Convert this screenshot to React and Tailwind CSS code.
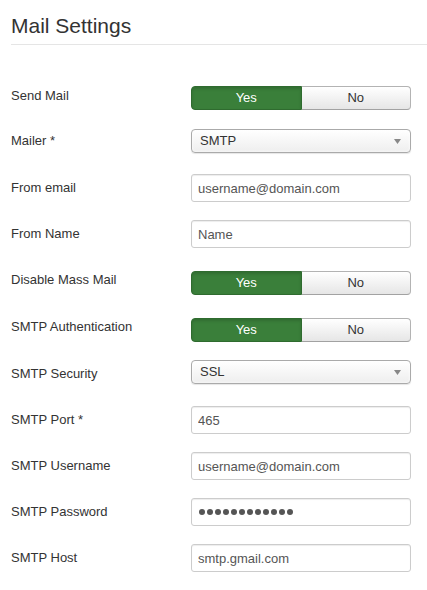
import React from 'react'

const font = { fontFamily: '"Liberation Sans", Arial, sans-serif' }

const rows = [
  { label: 'Send Mail', type: 'toggle', on: true, h: 'h-[45px]', off: 'mt-[4px]' },
  { label: 'Mailer *', type: 'select', value: 'SMTP', h: 'h-[47px]', off: 'mt-[2px]' },
  { label: 'From email', type: 'input', value: 'username@domain.com', h: 'h-[46px]', off: 'mt-0' },
  { label: 'From Name', type: 'input', value: 'Name', h: 'h-[46px]', off: 'mt-0' },
  { label: 'Disable Mass Mail', type: 'toggle', on: true, h: 'h-[47px]', off: 'mt-[5px]' },
  { label: 'SMTP Authentication', type: 'toggle', on: true, h: 'h-[47px]', off: 'mt-[5px]' },
  { label: 'SMTP Security', type: 'select', value: 'SSL', h: 'h-[46px]', off: 'mt-0' },
  { label: 'SMTP Port *', type: 'input', value: '465', h: 'h-[46px]', off: 'mt-0' },
  { label: 'SMTP Username', type: 'input', value: 'username@domain.com', h: 'h-[46px]', off: 'mt-0' },
  { label: 'SMTP Password', type: 'password', h: 'h-[46px]', off: 'mt-0' },
  { label: 'SMTP Host', type: 'input', value: 'smtp.gmail.com', h: 'h-[46px]', off: 'mt-0' },
]

const Toggle = ({ on }) => (
  <div className="flex h-[24px] w-[220px] text-[13px]">
    <div
      className={
        on
          ? 'flex-1 flex items-center justify-center rounded-l-[4px] border border-[#2f6b2f] bg-[#3a7f3a] text-white shadow-[inset_0_2px_3px_rgba(0,0,0,0.15)]'
          : 'flex-1 flex items-center justify-center rounded-l-[4px] border border-[#b3b3b3] bg-gradient-to-b from-white to-[#e6e6e6] text-[#333]'
      }
    >
      Yes
    </div>
    <div
      className={
        on
          ? 'flex-1 flex items-center justify-center rounded-r-[4px] border border-l-0 border-[#b3b3b3] border-b-[#a2a2a2] bg-gradient-to-b from-white to-[#e6e6e6] text-[#333]'
          : 'flex-1 flex items-center justify-center rounded-r-[4px] border border-l-0 border-[#b32d2d] bg-[#bd362f] text-white'
      }
    >
      No
    </div>
  </div>
)

const Select = ({ value }) => (
  <div className="flex h-[24px] w-[220px] items-center justify-between rounded-[4px] border border-[#aaa] bg-gradient-to-b from-white to-[#eee] pl-[8px] pr-[9px] text-[13px] text-[#333] shadow-[0_0_3px_white_inset,0_1px_1px_rgba(0,0,0,0.1)]">
    <span>{value}</span>
    <svg width="7" height="5" viewBox="0 0 7 5">
      <path d="M0 0 H7 L3.5 5 Z" fill="#888" />
    </svg>
  </div>
)

const Input = ({ value }) => (
  <input
    readOnly
    defaultValue={value}
    className="h-[28px] w-[220px] rounded-[3px] border border-[#ccc] px-[6px] text-[13px] text-[#555] shadow-[inset_0_1px_1px_rgba(0,0,0,0.075)] outline-none"
    style={font}
  />
)

const Password = () => (
  <div className="flex h-[28px] w-[220px] items-center rounded-[3px] border border-[#ccc] pl-[7px] text-[#555] shadow-[inset_0_1px_1px_rgba(0,0,0,0.075)]">
    <div className="flex gap-[2px]">
      {Array.from({ length: 12 }).map((_, i) => (
        <span key={i} className="block h-[6px] w-[6px] rounded-full bg-[#555]" />
      ))}
    </div>
  </div>
)

export default function App() {
  return (
    <div className="min-h-screen w-[427px] bg-white pl-[11px] text-[#333]" style={font}>
      <div className="pt-[13px]">
        <h1 className="border-b border-[#e5e5e5] pb-[6px] text-[21px] leading-[25px] font-normal text-[#333]">
          Mail Settings
        </h1>
      </div>

      <div className="mt-[37px]">
        {rows.map((r) => (
          <div key={r.label} className={`flex items-start ${r.h}`}>
            <div className="flex h-[28px] w-[180px] items-center text-[13px] text-[#333]">{r.label}</div>
            <div className={r.off}>
              {r.type === 'toggle' && <Toggle on={r.on} />}
              {r.type === 'select' && <Select value={r.value} />}
              {r.type === 'input' && <Input value={r.value} />}
              {r.type === 'password' && <Password />}
            </div>
          </div>
        ))}
      </div>
    </div>
  )
}
